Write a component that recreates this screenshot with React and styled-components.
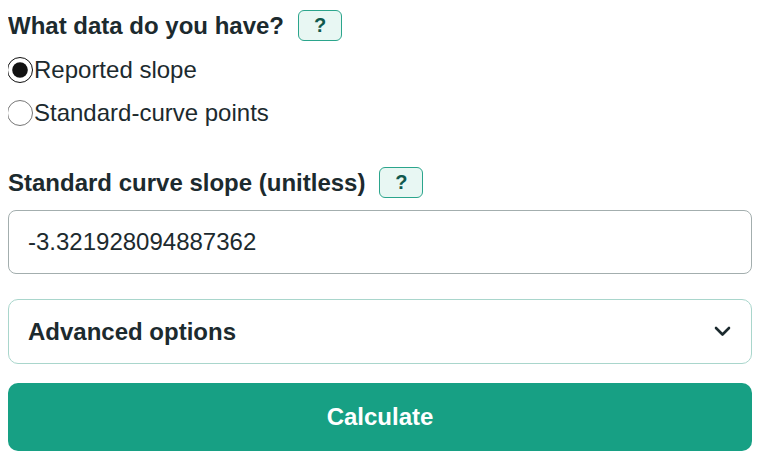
import React, { useState } from 'react'
import styled, { createGlobalStyle } from 'styled-components'

const Global = createGlobalStyle`
body{
margin:8px;
background:#fff;
font-family:"Liberation Sans", Arial, sans-serif;
color:#1c2a2e;
}
`
const Form = styled.div`
display:flex;
flex-direction:column;
padding-top:2px;
`
const LabelRow = styled.div`
display:flex;
align-items:center;
gap:14px;
height:31px;
margin-top:${({ top }) => top || 0}px;
`
const Label = styled.div`
font-size:24px;
font-weight:700;
color:#1c2a2e;
`
const Help = styled.button`
width:44px;
height:31px;
box-sizing:border-box;
border:1.5px solid #2ba58c;
border-radius:6px;
background:#e8f7f3;
color:#10594d;
font-family:"Liberation Sans", Arial, sans-serif;
font-size:20px;
font-weight:700;
padding:0;
`
const RadioGroup = styled.div`
display:flex;
flex-direction:column;
gap:13px;
margin-top:14px;
`
const RadioRow = styled.label`
display:flex;
align-items:center;
height:30px;
font-size:24px;
color:#1c2a2e;
`
const Radio = styled.input`
width:26px;
height:26px;
margin:0 1px 0 -1px;
accent-color:#111;
`
const Input = styled.input`
margin-top:12px;
height:64px;
box-sizing:border-box;
width:100%;
border:1.5px solid #a3aeae;
border-radius:8px;
padding:0 19px;
font-family:"Liberation Sans", Arial, sans-serif;
font-size:24px;
color:#1c2a2e;
outline:none;
`
const Details = styled.div`
margin-top:25px;
height:65px;
box-sizing:border-box;
border:1.5px solid #a9d6cc;
border-radius:10px;
display:flex;
align-items:center;
justify-content:space-between;
padding:0 19px;
`
const Chevron = styled.svg`
width:17px;
height:11px;
margin-right:1px;
`
const Calc = styled.button`
margin-top:19px;
height:68px;
width:100%;
border:none;
border-radius:10px;
background:#17a084;
color:#fff;
font-family:"Liberation Sans", Arial, sans-serif;
font-size:24px;
font-weight:700;
`

export default function App() {
  const [mode, setMode] = useState('slope')
  return (
    <Form>
      <Global />
      <LabelRow>
        <Label>What data do you have?</Label>
        <Help>?</Help>
      </LabelRow>
      <RadioGroup>
        <RadioRow>
          <Radio type="radio" name="mode" checked={mode === 'slope'} onChange={() => setMode('slope')} />
          Reported slope
        </RadioRow>
        <RadioRow>
          <Radio type="radio" name="mode" checked={mode === 'points'} onChange={() => setMode('points')} />
          Standard-curve points
        </RadioRow>
      </RadioGroup>
      <LabelRow top={39}>
        <Label>Standard curve slope (unitless)</Label>
        <Help>?</Help>
      </LabelRow>
      <Input defaultValue="-3.321928094887362" />
      <Details>
        <Label>Advanced options</Label>
        <Chevron viewBox="0 0 17 11" fill="none" stroke="#1c2a2e" strokeWidth="2.6" strokeLinecap="round" strokeLinejoin="round">
          <path d="M2 2l6.5 6.5L15 2" />
        </Chevron>
      </Details>
      <Calc>Calculate</Calc>
    </Form>
  )
}
